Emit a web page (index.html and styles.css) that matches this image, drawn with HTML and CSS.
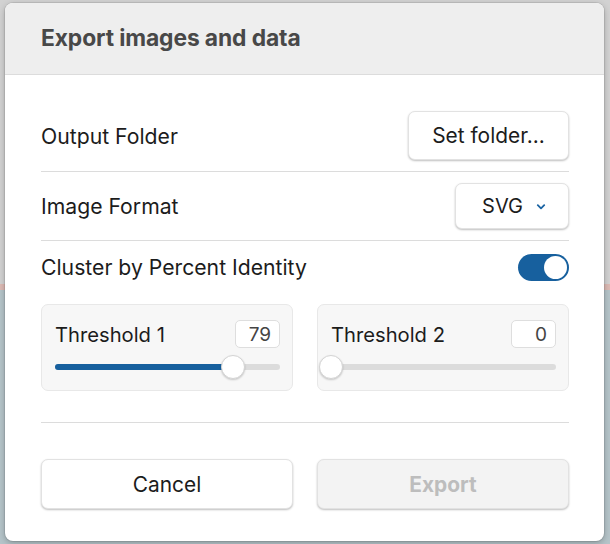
FILE: index.html
```html
<!DOCTYPE html>
<html>
<head>
<meta charset="utf-8">
<link rel="stylesheet" href="styles.css">
</head>
<body>
<div class="dialog">
  <div class="dialog-header"><h1 class="dialog-title">Export images and data</h1></div>
  <div class="dialog-body">
    <div class="row row-folder">
      <span class="label">Output Folder</span>
      <button class="btn btn-folder">Set folder...</button>
    </div>
    <div class="row row-format">
      <span class="label">Image Format</span>
      <button class="btn btn-select">SVG
        <svg class="chev" width="10" height="6" viewBox="0 0 10 6"><path d="M1.8 1.2 L5 4.4 L8.2 1.2" fill="none" stroke="#1a64a3" stroke-width="1.8" stroke-linecap="round" stroke-linejoin="round"/></svg>
      </button>
    </div>
    <div class="row row-toggle">
      <span class="label">Cluster by Percent Identity</span>
      <span class="toggle"><span class="knob"></span></span>
    </div>
    <div class="cards">
      <div class="card">
        <div class="card-top">
          <span class="card-label">Threshold 1</span>
          <span class="value">79</span>
        </div>
        <div class="slider">
          <div class="fill" style="width:79%"></div>
          <div class="thumb" style="left:79%"></div>
        </div>
      </div>
      <div class="card">
        <div class="card-top">
          <span class="card-label">Threshold 2</span>
          <span class="value">0</span>
        </div>
        <div class="slider">
          <div class="fill" style="width:0%"></div>
          <div class="thumb" style="left:0%"></div>
        </div>
      </div>
    </div>
    <div class="divider"></div>
    <div class="actions">
      <button class="btn btn-action">Cancel</button>
      <button class="btn btn-action btn-disabled">Export</button>
    </div>
  </div>
</div>
</body>
</html>
```

FILE: styles.css
```css
html, body {
  margin: 0;
  padding: 0;
}
body {
  width: 610px;
  height: 544px;
  overflow: hidden;
  background: linear-gradient(180deg, #d2d2d2 0, #d2d2d2 284px, #dcbab4 284px, #dcbab4 290px, #b5c4c9 290px, #b5c4c9 100%);
  font-family: Inter, "Noto Sans", sans-serif;
  color: #1c1c1c;
}
.dialog {
  margin: 3px 0 0 5px;
  width: 599px;
  height: 538px;
  background: #fff;
  border-radius: 8px;
  overflow: hidden;
  box-shadow: 0 0 0 1px rgba(0,0,0,0.08), 0 2px 6px rgba(0,0,0,0.25);
  display: flex;
  flex-direction: column;
}
.dialog-header {
  height: 72px;
  background: #eeeeee;
  border-bottom: 1px solid #dcdcdc;
  display: flex;
  align-items: center;
  padding-left: 36px;
  box-sizing: border-box;
  flex: none;
}
.dialog-title {
  margin: 0 0 2px;
  font-size: 22.8px;
  font-weight: 700;
  color: #484848;
  letter-spacing: -0.1px;
}
.dialog-body {
  padding: 0 35px 0 36px;
  display: flex;
  flex-direction: column;
}
.row {
  display: flex;
  align-items: center;
  justify-content: space-between;
}
.row-folder {
  padding: 36px 0 11px;
  border-bottom: 1px solid #dcdcdc;
}
.row-format {
  padding: 11px 0 11px;
  border-bottom: 1px solid #dcdcdc;
}
.row-toggle {
  height: 52px;
}
.label {
  font-size: 21.2px;
}
.btn {
  font-family: Inter, "Noto Sans", sans-serif;
  font-size: 20.9px;
  color: #1c1c1c;
  background: #fff;
  border: 1px solid #e2e2e2;
  border-radius: 7px;
  box-shadow: 0 1px 2px rgba(0,0,0,0.25);
  padding: 0;
  cursor: pointer;
}
.btn-folder {
  width: 161px;
  height: 49px;
}
.btn-select {
  width: 114px;
  height: 46px;
  display: flex;
  align-items: center;
  justify-content: center;
  gap: 13px;
  padding-left: 4px;
  font-size: 20px;
}
.chev {
  margin-top: 1px;
}
.toggle {
  width: 51px;
  height: 27px;
  border-radius: 14px;
  background: #17609e;
  display: flex;
  align-items: center;
  justify-content: flex-end;
  padding-right: 2px;
  box-sizing: border-box;
}
.knob {
  width: 23px;
  height: 23px;
  border-radius: 50%;
  background: #fff;
}
.cards {
  margin-top: 11px;
  display: grid;
  grid-template-columns: 1fr 1fr;
  gap: 24px;
}
.card {
  height: 87px;
  box-sizing: border-box;
  background: #f7f7f7;
  border: 1px solid #e8e8e8;
  border-radius: 7px;
  padding: 15px 12px 0 13px;
}
.card-top {
  display: flex;
  justify-content: space-between;
  align-items: center;
  height: 28px;
}
.card-label {
  font-size: 20.2px;
}
.value {
  box-sizing: border-box;
  height: 28px;
  min-width: 45px;
  padding: 0 8px;
  background: #fff;
  border: 1px solid #dedede;
  border-radius: 5px;
  font-size: 19px;
  color: #444;
  display: flex;
  align-items: center;
  justify-content: flex-end;
}
.slider {
  position: relative;
  margin-top: 16px;
  height: 6px;
  border-radius: 3px;
  background: #dcdcdc;
}
.fill {
  height: 6px;
  border-radius: 3px;
  background: #17609e;
}
.thumb {
  position: absolute;
  top: -9px;
  width: 24px;
  height: 24px;
  margin-left: -12px;
  border-radius: 50%;
  background: #fff;
  box-sizing: border-box;
  border: 1px solid #d4d4d4;
  box-shadow: 0 1px 2px rgba(0,0,0,0.2);
}
.divider {
  margin-top: 31px;
  height: 1px;
  background: #dcdcdc;
}
.actions {
  margin-top: 36px;
  display: grid;
  grid-template-columns: 1fr 1fr;
  gap: 24px;
}
.btn-action {
  height: 50px;
}
.btn-disabled {
  background: #f3f3f3;
  color: #bdbdbd;
  font-weight: 700;
}
```
